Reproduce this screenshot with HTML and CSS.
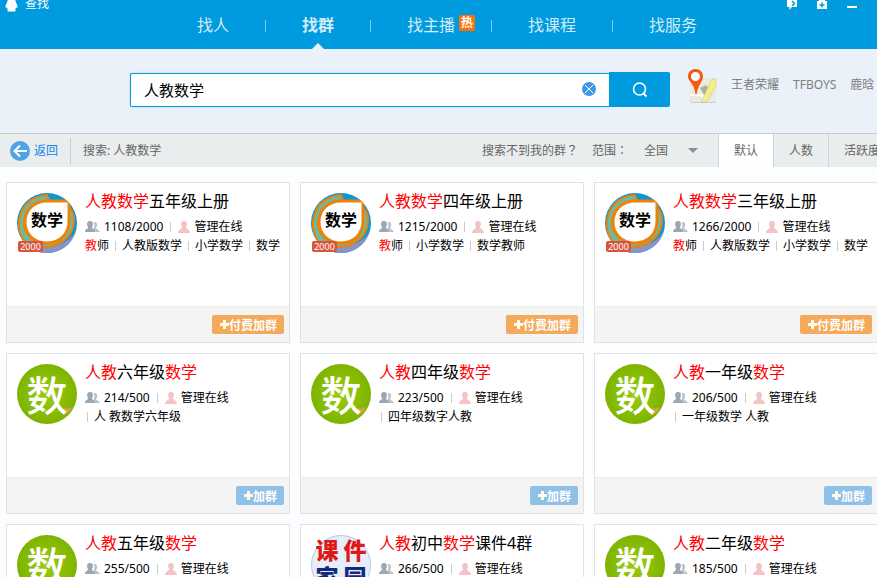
FILE: index.html
```html
<!DOCTYPE html>
<html lang="zh-CN">
<head>
    <meta charset="UTF-8">
    <meta name="viewport" content="width=device-width, initial-scale=1.0">
    <title>查找</title>
    <link rel="stylesheet" href="styles.css">
</head>
<body>
    <!-- Shared icons and avatars -->
    <svg class="sprite" aria-hidden="true">
        <symbol id="people" viewBox="0 0 15 12">
            <path fill="#b9c2ca" d="M9 1c3 0 3.500 2 3 4-.3 1-.8 1.500-.8 2.300 0 1.200 3 1 3.500 3.700h-4c-.5-1.800-2-2.400-2-3.200C9.500 6 10 3 8.500 1z"/>
            <path fill="#9aa8b4" d="M5 0c2.500 0 3.300 2 2.800 4.200-.2 1-.8 1.600-.8 2.400 0 1.400 3 1.200 3.400 4.400H0c.3-3.200 3-3 3-4.400 0-.8-.6-1.400-.8-2.400C1.700 2 2.500 0 5 0z"/>
        </symbol>
        <symbol id="person" viewBox="0 0 12 12">
            <path fill="#f3c3c6" d="M6 0c2.500 0 3.200 2 2.800 4-.2 1-.8 1.700-.8 2.500C8 8 11.700 8 12 12H0c.3-4 4-4 4-5.500C4 5.700 3.400 5 3.200 4 2.800 2 3.500 0 6 0z"/>
        </symbol>
        <symbol id="book" viewBox="0 0 60 60">
            <clipPath id="round"><circle cx="30" cy="30" r="30"/></clipPath>
            <g clip-path="url(#round)">
                <rect width="60" height="60" fill="#0c96d4"/>
                <path fill="#8694cc" d="M60 36C54 50 36 56 18 54l6 8h36z"/>
                <path fill="#69bca2" stroke="#ee8208" stroke-width="2" d="M30 2C12 3 1 16 2 34c1 10 6 17 13 20l8-4C12 46 6 38 7 28 8 15 18 8 32 7z"/>
                <path fill="#69bca2" stroke="#ee8208" stroke-width="2" d="M14 50c20 10 43-2 43-24 0-5-2-9-6-12v14c0 14-9 22-22 22z"/>
                <path fill="#fff" stroke="#ee8208" stroke-width="3" d="M30 8h22v20c0 13-9 22-22 22S8 41 8 29 17 8 30 8z"/>
            </g>
        </symbol>
        <symbol id="green" viewBox="0 0 60 60">
            <radialGradient id="leaf"><stop offset="0" stop-color="#9bcc0c"/><stop offset="1" stop-color="#7db400"/></radialGradient>
            <circle cx="30" cy="30" r="30" fill="url(#leaf)"/>
            <path fill="#dfa052" d="M43 47l5-3 2 1 3-2 1 3-6 5z"/>
        </symbol>
        <symbol id="course" viewBox="0 0 60 60">
            <circle cx="30" cy="30" r="29.500" fill="#e6eefa" stroke="#b9c8dc"/>
        </symbol>
    </svg>

    <!-- Header -->
    <header>
        <div class="title-bar">
            <svg class="penguin" viewBox="0 0 14 18"><path fill="#fff" d="M7 0c3 0 4.500 2.500 4.500 6 1 2 2.500 5 2.300 7-.3 1-.9.500-1.500-.5-.2 1-.6 2-1.300 2.700 1 .6 1 1.800 0 2.300H3c-1-.5-1-1.700 0-2.300-.7-.7-1.100-1.700-1.300-2.700-.6 1-1.200 1.500-1.500.5-.2-2 1.300-5 2.300-7C2.500 2.500 4 0 7 0z"/></svg>
            <span class="window-title">查找</span>
            <div class="window-tools">
                <button type="button" aria-label="反馈"><svg viewBox="0 0 10 12"><path fill="#fff" d="M0 0h10v9H5l-2.500 3V9H0z"/><path fill="none" stroke="#009bde" stroke-width="1.500" d="M5 3l2.500 2.500L5 8"/></svg></button>
                <button type="button" aria-label="工具"><svg viewBox="0 0 10 12"><path fill="#fff" d="M0 3h2V0h6v3h2v8H0z"/><path stroke="#009bde" stroke-width="1.500" d="M5 4.500v5M2.500 7h5"/></svg></button>
                <button type="button" aria-label="最小化"><svg viewBox="0 0 10 12"><path fill="#fff" d="M0 8h10v2H0z"/></svg></button>
            </div>
        </div>
        <nav>
            <a href="#">找人</a>
            <a href="#" class="active">找群</a>
            <a href="#">找主播<span class="hot">热</span></a>
            <a href="#">找课程</a>
            <a href="#">找服务</a>
        </nav>
    </header>

    <!-- Search -->
    <section class="search">
        <form>
            <div class="search-field">
                <input type="text" value="人教数学" aria-label="搜索群">
                <button type="reset" class="clear" aria-label="清空"><svg viewBox="0 0 14 14"><circle cx="7" cy="7" r="7" fill="#3f97e6"/><path stroke="#fff" d="M3 3l8 8M11 3l-8 8"/></svg></button>
            </div>
            <button type="submit" class="search-button" aria-label="搜索"><svg viewBox="0 0 16 16"><circle cx="7.500" cy="7" r="6" fill="none" stroke="#fff" stroke-width="1.600"/><path stroke="#fff" stroke-width="1.800" d="M11 11l3.500 3.500"/></svg></button>
        </form>
        <svg class="map" viewBox="0 0 32 36">
            <rect x="4" y="11" width="26" height="24" rx="3" fill="#c5ccd2"/>
            <rect x="4" y="10" width="26" height="24" rx="3" fill="#eceadf"/>
            <path fill="#a5b991" d="M14 20l6-3 5 6-3 4h-4z"/>
            <path fill="#fff" d="M4 26h13l5 8h-3l-4-6H4z"/>
            <path fill="#f4ef84" stroke="#c7c79c" stroke-width=".6" d="M26 11h4v6l-9 17h-6z"/>
            <path fill="#f15a13" d="M9.500 1C14 1 17 4 17 8.500c0 5-4.500 7-6.500 18h-1C8.500 15.500 2 13.500 2 8.500 2 4 5 1 9.500 1z"/>
            <circle cx="9.500" cy="8.500" r="4.500" fill="#fff"/>
        </svg>
        <div class="hot-words">
            <a href="#">王者荣耀</a>
            <a href="#">TFBOYS</a>
            <a href="#">鹿晗</a>
        </div>
    </section>

    <!-- Filter Toolbar -->
    <div class="toolbar">
        <a href="#" class="back"><svg viewBox="0 0 20 20"><circle cx="10" cy="10" r="10" fill="#4fa3e8"/><path fill="none" stroke="#fff" stroke-width="2" d="M17 10H5M10 4.500L4.500 10l5.500 5.500"/></svg>返回</a>
        <span class="keyword">搜索: 人教数学</span>
        <a href="#" class="help">搜索不到我的群<span class="mark" lang="zh-TW">？</span></a>
        <label for="range">范围<span class="mark" lang="zh-TW">：</span></label>
        <div class="range">
            <select id="range"><option>全国</option></select>
            <svg viewBox="0 0 10 5"><path fill="#8a8f93" d="M0 0h10L5 5z"/></svg>
        </div>
        <button type="button" class="sort active">默认</button>
        <button type="button" class="sort">人数</button>
        <button type="button" class="sort">活跃度</button>
    </div>

    <!-- Group Cards -->
    <main>
        <article class="card">
            <div class="card-body">
                <div class="avatar"><svg><use href="#book"/></svg><span class="face book">数学</span><span class="limit">2000</span></div>
                <div class="info">
                    <h2><em>人教数学</em>五年级上册</h2>
                    <p class="count"><svg class="people"><use href="#people"/></svg>1108/2000<i></i><svg class="person"><use href="#person"/></svg>管理在线</p>
                    <p><em>教</em>师<i></i>人教版数学<i></i>小学数学<i></i>数学</p>
                </div>
            </div>
            <div class="card-footer"><button type="button" class="join pay"><svg viewBox="0 0 9 9"><path d="M3 0h3v3h3v3H6v3H3V6H0V3h3z"/></svg>付费加群</button></div>
        </article>
        <article class="card">
            <div class="card-body">
                <div class="avatar"><svg><use href="#book"/></svg><span class="face book">数学</span><span class="limit">2000</span></div>
                <div class="info">
                    <h2><em>人教数学</em>四年级上册</h2>
                    <p class="count"><svg class="people"><use href="#people"/></svg>1215/2000<i></i><svg class="person"><use href="#person"/></svg>管理在线</p>
                    <p><em>教</em>师<i></i>小学数学<i></i>数学教师</p>
                </div>
            </div>
            <div class="card-footer"><button type="button" class="join pay"><svg viewBox="0 0 9 9"><path d="M3 0h3v3h3v3H6v3H3V6H0V3h3z"/></svg>付费加群</button></div>
        </article>
        <article class="card">
            <div class="card-body">
                <div class="avatar"><svg><use href="#book"/></svg><span class="face book">数学</span><span class="limit">2000</span></div>
                <div class="info">
                    <h2><em>人教数学</em>三年级上册</h2>
                    <p class="count"><svg class="people"><use href="#people"/></svg>1266/2000<i></i><svg class="person"><use href="#person"/></svg>管理在线</p>
                    <p><em>教</em>师<i></i>人教版数学<i></i>小学数学<i></i>数学</p>
                </div>
            </div>
            <div class="card-footer"><button type="button" class="join pay"><svg viewBox="0 0 9 9"><path d="M3 0h3v3h3v3H6v3H3V6H0V3h3z"/></svg>付费加群</button></div>
        </article>
        <article class="card">
            <div class="card-body">
                <div class="avatar"><svg><use href="#green"/></svg><span class="face green">数</span></div>
                <div class="info">
                    <h2><em>人教</em>六年级<em>数学</em></h2>
                    <p class="count"><svg class="people"><use href="#people"/></svg>214/500<i></i><svg class="person"><use href="#person"/></svg>管理在线</p>
                    <p><i class="first"></i>人 教数学六年级</p>
                </div>
            </div>
            <div class="card-footer"><button type="button" class="join"><svg viewBox="0 0 9 9"><path d="M3 0h3v3h3v3H6v3H3V6H0V3h3z"/></svg>加群</button></div>
        </article>
        <article class="card">
            <div class="card-body">
                <div class="avatar"><svg><use href="#green"/></svg><span class="face green">数</span></div>
                <div class="info">
                    <h2><em>人教</em>四年级<em>数学</em></h2>
                    <p class="count"><svg class="people"><use href="#people"/></svg>223/500<i></i><svg class="person"><use href="#person"/></svg>管理在线</p>
                    <p><i class="first"></i>四年级数字人教</p>
                </div>
            </div>
            <div class="card-footer"><button type="button" class="join"><svg viewBox="0 0 9 9"><path d="M3 0h3v3h3v3H6v3H3V6H0V3h3z"/></svg>加群</button></div>
        </article>
        <article class="card">
            <div class="card-body">
                <div class="avatar"><svg><use href="#green"/></svg><span class="face green">数</span></div>
                <div class="info">
                    <h2><em>人教</em>一年级<em>数学</em></h2>
                    <p class="count"><svg class="people"><use href="#people"/></svg>206/500<i></i><svg class="person"><use href="#person"/></svg>管理在线</p>
                    <p><i class="first"></i>一年级数学 人教</p>
                </div>
            </div>
            <div class="card-footer"><button type="button" class="join"><svg viewBox="0 0 9 9"><path d="M3 0h3v3h3v3H6v3H3V6H0V3h3z"/></svg>加群</button></div>
        </article>
        <article class="card">
            <div class="card-body">
                <div class="avatar"><svg><use href="#green"/></svg><span class="face green">数</span></div>
                <div class="info">
                    <h2><em>人教</em>五年级<em>数学</em></h2>
                    <p class="count"><svg class="people"><use href="#people"/></svg>255/500<i></i><svg class="person"><use href="#person"/></svg>管理在线</p>
                </div>
            </div>
        </article>
        <article class="card">
            <div class="card-body">
                <div class="avatar"><svg><use href="#course"/></svg><span class="face course"><b>课</b><b>件</b><b>家</b><b>园</b></span></div>
                <div class="info">
                    <h2><em>人教</em>初中<em>数学</em>课件4群</h2>
                    <p class="count"><svg class="people"><use href="#people"/></svg>266/500<i></i><svg class="person"><use href="#person"/></svg>管理在线</p>
                </div>
            </div>
        </article>
        <article class="card">
            <div class="card-body">
                <div class="avatar"><svg><use href="#green"/></svg><span class="face green">数</span></div>
                <div class="info">
                    <h2><em>人教</em>二年级<em>数学</em></h2>
                    <p class="count"><svg class="people"><use href="#people"/></svg>185/500<i></i><svg class="person"><use href="#person"/></svg>管理在线</p>
                </div>
            </div>
        </article>
    </main>
</body>
</html>
```
FILE: styles.css
```css
/* General Styles */
* {
    box-sizing: border-box;
}

body {
    margin: 0;
    height: 100vh;
    overflow: hidden;
    background-color: #fcfdff;
    font-family: "Noto Sans", "Noto Sans CJK SC", sans-serif;
    font-size: 12px;
    color: #000;
}

button, input, select {
    font: inherit;
    border: none;
    padding: 0;
    margin: 0;
    background: none;
}

button {
    cursor: pointer;
}

a {
    text-decoration: none;
    color: inherit;
}

svg {
    display: block;
    flex-shrink: 0;
}

.sprite {
    position: absolute;
    width: 0;
    height: 0;
}

/* Header */
header {
    background-color: #009bde;
    color: #d3ecf9;
}

.title-bar {
    display: flex;
    align-items: center;
    height: 8px;
    padding: 0 20px 0 5px;
}

.penguin {
    width: 13px;
    height: 16px;
}

.window-title {
    margin-left: 7px;
    line-height: 16px;
    color: #fff;
}

.window-tools {
    display: flex;
    gap: 20px;
    margin-left: auto;
}

.window-tools svg {
    width: 10px;
    height: 12px;
}

nav {
    display: flex;
    padding: 0 0 6px 197px;
    font-size: 16px;
    line-height: 35px;
}

nav a {
    position: relative;
    display: flex;
    align-items: center;
}

nav a + a::before {
    content: "";
    width: 1px;
    height: 12px;
    margin: 0 36px;
    background-color: #7fcbec;
}

nav .active {
    font-weight: bold;
}

nav .active::after {
    content: "";
    position: absolute;
    right: 10px;
    bottom: -6px;
    border: 6px solid transparent;
    border-top: none;
    border-bottom-color: #eaf1f9;
}

.hot {
    position: absolute;
    left: 100%;
    top: 7px;
    width: 16px;
    margin-left: 4px;
    border-radius: 2px;
    background-color: #ff7200;
    color: #fff;
    font-size: 12px;
    font-weight: bold;
    line-height: 16px;
    text-align: center;
}

/* Search */
.search {
    display: flex;
    align-items: flex-start;
    height: 84px;
    padding: 23px 0 0 130px;
    background-color: #eaf1f9;
}

.search form {
    display: flex;
    align-items: flex-end;
    flex: 0 0 540px;
}

.search-field {
    display: flex;
    align-items: center;
    flex: 1;
    height: 34px;
    padding: 0 13px 2px;
    border: 1px solid #009bde;
    border-right: none;
    border-radius: 2px 0 0 2px;
    background-color: #fff;
    box-shadow: 0 0 3px #c5d8e8;
}

.search-field input {
    flex: 1;
    min-width: 0;
    font-size: 15px;
    outline: none;
}

.clear svg {
    width: 14px;
    height: 14px;
}

.search-button {
    display: flex;
    align-items: center;
    justify-content: center;
    width: 61px;
    height: 35px;
    border-radius: 0 2px 2px 0;
    background-color: #009bde;
}

.search-button svg {
    width: 16px;
    height: 16px;
}

.map {
    width: 32px;
    height: 36px;
    margin: -4px 13px 0 16px;
}

.hot-words {
    display: flex;
    gap: 14px;
    line-height: 26px;
    color: #808080;
    white-space: nowrap;
}

/* Filter Toolbar */
.toolbar {
    display: flex;
    align-items: center;
    height: 34px;
    padding-left: 10px;
    border-top: 1px solid #c6cbd0;
    background-color: #e9eded;
    color: #666;
    line-height: 33px;
    white-space: nowrap;
}

.toolbar > * {
    flex-shrink: 0;
}

.back {
    display: flex;
    align-items: center;
    gap: 4px;
    width: 61px;
    height: 26px;
    border-right: 1px solid #c9cdcf;
    color: #1583e8;
}

.back svg {
    width: 20px;
    height: 20px;
}

.keyword {
    flex: 1 0 411px;
    padding-left: 12px;
}

.help {
    margin-right: 14px;
}

/* centred full-width punctuation */
.mark {
    font-family: "Noto Sans CJK TC", sans-serif;
    line-height: 16px;
}

.range {
    display: flex;
    align-items: center;
    width: 74px;
    margin-left: 16px;
}

.range select {
    width: 54px;
    margin-right: -10px;
    appearance: none;
    color: #666;
    outline: none;
}

.range svg {
    width: 10px;
    height: 5px;
    pointer-events: none;
}

.sort {
    height: 33px;
    padding: 0 15px;
    border-left: 1px solid #c9d8e2;
    color: #666;
}

.sort.active {
    background-color: #fff;
}

/* Group Cards */
main {
    display: grid;
    grid-template-columns: repeat(3, minmax(284px, 1fr));
    gap: 10px;
    padding: 15px 0 0 6px;
}

.card {
    border: 1px solid #dfe2e6;
    background-color: #fff;
}

.card-body {
    display: flex;
    gap: 8px;
    height: 123px;
    padding: 10px 0 0 10px;
}

.avatar {
    position: relative;
    flex: 0 0 60px;
}

.avatar svg {
    width: 60px;
    height: 60px;
}

.face {
    position: absolute;
    left: 0;
    top: 0;
    width: 60px;
    line-height: 58px;
    text-align: center;
}

.face.book {
    font-size: 16px;
    font-weight: bold;
    line-height: 54px;
}

.face.green {
    font-family: "Noto Sans CJK SC", sans-serif;
    font-size: 41px;
    font-weight: 500;
    color: #fff;
}

.face.course {
    display: grid;
    grid-template-columns: 28px 28px;
    justify-content: center;
    padding-top: 2px;
    font-size: 23px;
    line-height: 27px;
    color: #14287c;
}

.course b {
    font-weight: 900;
}

.course b:nth-child(-n+2) {
    color: #e01818;
}

.limit {
    position: absolute;
    left: 1px;
    top: 48px;
    width: 25px;
    border-radius: 2px;
    background-color: #d8553c;
    color: #fff;
    font-size: 9px;
    line-height: 11px;
    text-align: center;
}

.info {
    white-space: nowrap;
}

.info h2 {
    margin: 0 0 7px;
    font-size: 16px;
    font-weight: normal;
    line-height: 17px;
}

.info em {
    font-style: normal;
    color: #f00;
}

.info p {
    display: flex;
    align-items: center;
    margin: 0;
    line-height: 19px;
    white-space: pre;
}

.info i {
    width: 1px;
    height: 10px;
    margin: 0 6px;
    background-color: #ccc;
}

.info .first {
    margin-left: 2px;
}

.info .count i {
    margin: 0 7px;
}

.people {
    width: 15px;
    height: 12px;
    margin-right: 4px;
}

.person {
    width: 12px;
    height: 12px;
    margin-right: 4px;
}

.card-footer {
    display: flex;
    align-items: center;
    justify-content: flex-end;
    height: 36px;
    padding-right: 5px;
    border-top: 1px solid #ececec;
    background-color: #f4f4f4;
}

.join {
    display: flex;
    align-items: center;
    height: 19px;
    padding: 0 7px 0 8px;
    border-radius: 2px;
    background-color: #8fc0e8;
    color: #fff;
    font-weight: bold;
}

.join svg {
    width: 9px;
    height: 9px;
    fill: #fffbe6;
}

.join.pay {
    background-color: #f3aa5a;
}
```
